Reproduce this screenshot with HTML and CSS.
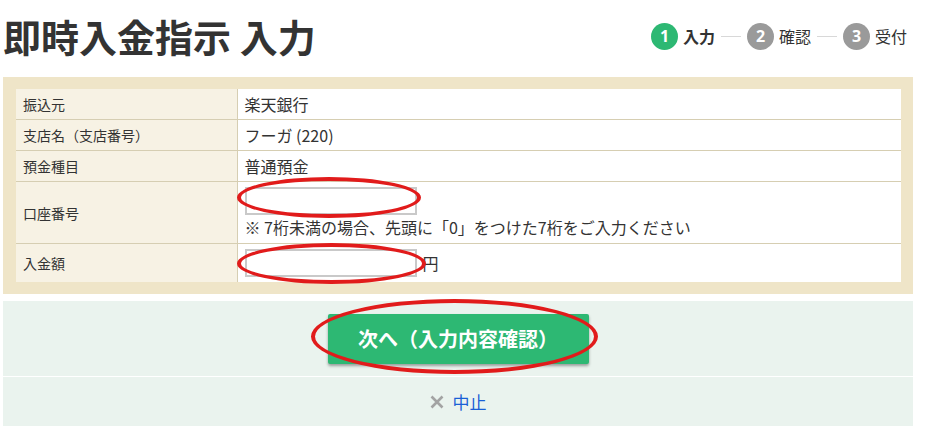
FILE: index.html
```html
<!DOCTYPE html>
<html lang="ja">
<head>
<meta charset="utf-8">
<title>即時入金指示 入力</title>
<link rel="stylesheet" href="styles.css">
</head>
<body>
<div class="page">
  <header class="head">
    <h1 class="title">即時入金指示 入力</h1>
    <ol class="steps">
      <li class="step current"><span class="num">1</span><span class="label">入力</span></li>
      <li class="sep"></li>
      <li class="step"><span class="num">2</span><span class="label">確認</span></li>
      <li class="sep"></li>
      <li class="step"><span class="num">3</span><span class="label">受付</span></li>
    </ol>
  </header>

  <div class="frame">
    <table class="form">
      <tr>
        <th>振込元</th>
        <td>楽天銀行</td>
      </tr>
      <tr>
        <th>支店名（支店番号）</th>
        <td>フーガ (220)</td>
      </tr>
      <tr>
        <th>預金種目</th>
        <td>普通預金</td>
      </tr>
      <tr>
        <th>口座番号</th>
        <td>
          <div class="field">
            <input class="input" type="text">
            <span class="mark mark-account"></span>
          </div>
          <div class="note">※ 7桁未満の場合、先頭に「0」をつけた7桁をご入力ください</div>
        </td>
      </tr>
      <tr class="last">
        <th>入金額</th>
        <td>
          <div class="field">
            <input class="input" type="text"><span class="unit">円</span>
            <span class="mark mark-amount"></span>
          </div>
        </td>
      </tr>
    </table>
  </div>

  <div class="actions">
    <div class="primary">
      <div class="btn-wrap">
        <button class="btn" type="button">次へ（入力内容確認）</button>
        <span class="mark mark-btn"></span>
      </div>
    </div>
    <div class="cancel">
      <svg class="x" width="14" height="14" viewBox="0 0 14 14" aria-hidden="true">
        <path d="M1.5 1.5 L12.5 12.5 M12.5 1.5 L1.5 12.5" stroke="#a3a3a3" stroke-width="2.6" stroke-linecap="butt" fill="none"/>
      </svg><a class="link" href="#">中止</a>
    </div>
  </div>
</div>
</body>
</html>
```

FILE: styles.css
```css
* { box-sizing: border-box; }
html, body { margin: 0; padding: 0; background: #fff; }
body {
  font-family: "Noto Sans CJK JP", "Noto Sans", sans-serif;
  color: #333;
}
.page {
  width: 910px;
  margin-left: 3px;
}
.head {
  height: 72px;
  margin-bottom: 5px;
  display: flex;
  align-items: center;
  justify-content: space-between;
}
.title {
  margin: 0;
  font-size: 38px;
  font-weight: 700;
  line-height: 1;
  color: #333;
  letter-spacing: 0;
}
.steps {
  list-style: none;
  margin: 0;
  padding: 0 6px 0 0;
  display: flex;
  align-items: center;
  gap: 6px;
}
.step {
  display: flex;
  align-items: center;
  gap: 5px;
}
.num {
  width: 27px;
  height: 27px;
  border-radius: 50%;
  background: #9a9a9a;
  color: #fff;
  font-weight: 700;
  font-size: 16px;
  display: flex;
  align-items: center;
  justify-content: center;
  font-family: "Open Sans", "Noto Sans", sans-serif;
}
.step.current .num { background: #2db873; }
.label {
  font-size: 16px;
  color: #333;
  line-height: 1;
}
.step.current .label { font-weight: 700; }
.sep {
  width: 20px;
  height: 1px;
  background: #d8d8d8;
}

.frame {
  background: #efe5c8;
  padding: 12px 12px 12px 13px;
}
.form {
  width: 100%;
  border-collapse: collapse;
  background: #fff;
}
.form th, .form td {
  padding: 5px 7px;
  line-height: 20px;
  text-align: left;
  vertical-align: middle;
  border-bottom: 1px solid #d6ceb2;
}
.form tr.last th, .form tr.last td { border-bottom: none; }
.form th {
  width: 221px;
  font-weight: 400;
  font-size: 14px;
  background: #f7f2e4;
  border-right: 1px solid #d6ceb2;
  color: #333;
}
.form td {
  font-size: 16px;
  color: #333;
}
.field {
  position: relative;
  display: flex;
  align-items: center;
  height: 28px;
}
.input {
  width: 172px;
  height: 28px;
  border: 2px solid #c9c9c9;
  background: #fff;
  margin: 0;
  padding: 2px 4px;
  font: inherit;
}
.unit { margin-left: 6px; font-size: 16px; }
.note {
  line-height: 22px;
  font-size: 16px;
  margin-top: 1px;
}

.mark {
  position: absolute;
  border: 4px solid #e11b1b;
  border-radius: 50%;
  pointer-events: none;
}
.mark-account {
  left: -8px;
  top: -10px;
  width: 184px;
  height: 41px;
}
.mark-amount {
  left: -8px;
  top: -6px;
  width: 189px;
  height: 41px;
}

.actions {
  margin-top: 7px;
  background: #eaf3ee;
}
.primary {
  height: 76px;
  display: flex;
  align-items: center;
  justify-content: center;
  border-bottom: 1px solid #fff;
}
.btn-wrap { position: relative; }
.btn {
  width: 261px;
  height: 50px;
  border: none;
  border-radius: 2px;
  background: #2db873;
  color: #fff;
  font-family: inherit;
  font-size: 20px;
  font-weight: 700;
  box-shadow: 0 2px 3px rgba(0,0,0,0.35);
  cursor: pointer;
}
.mark-btn {
  left: -17px;
  top: -15px;
  width: 287px;
  height: 75px;
}
.cancel {
  height: 49px;
  display: flex;
  align-items: center;
  justify-content: center;
  gap: 9px;
  font-size: 17px;
}
.x { display: block; }
.link {
  color: #1a5fd6;
  text-decoration: none;
  line-height: 1;
}
```
